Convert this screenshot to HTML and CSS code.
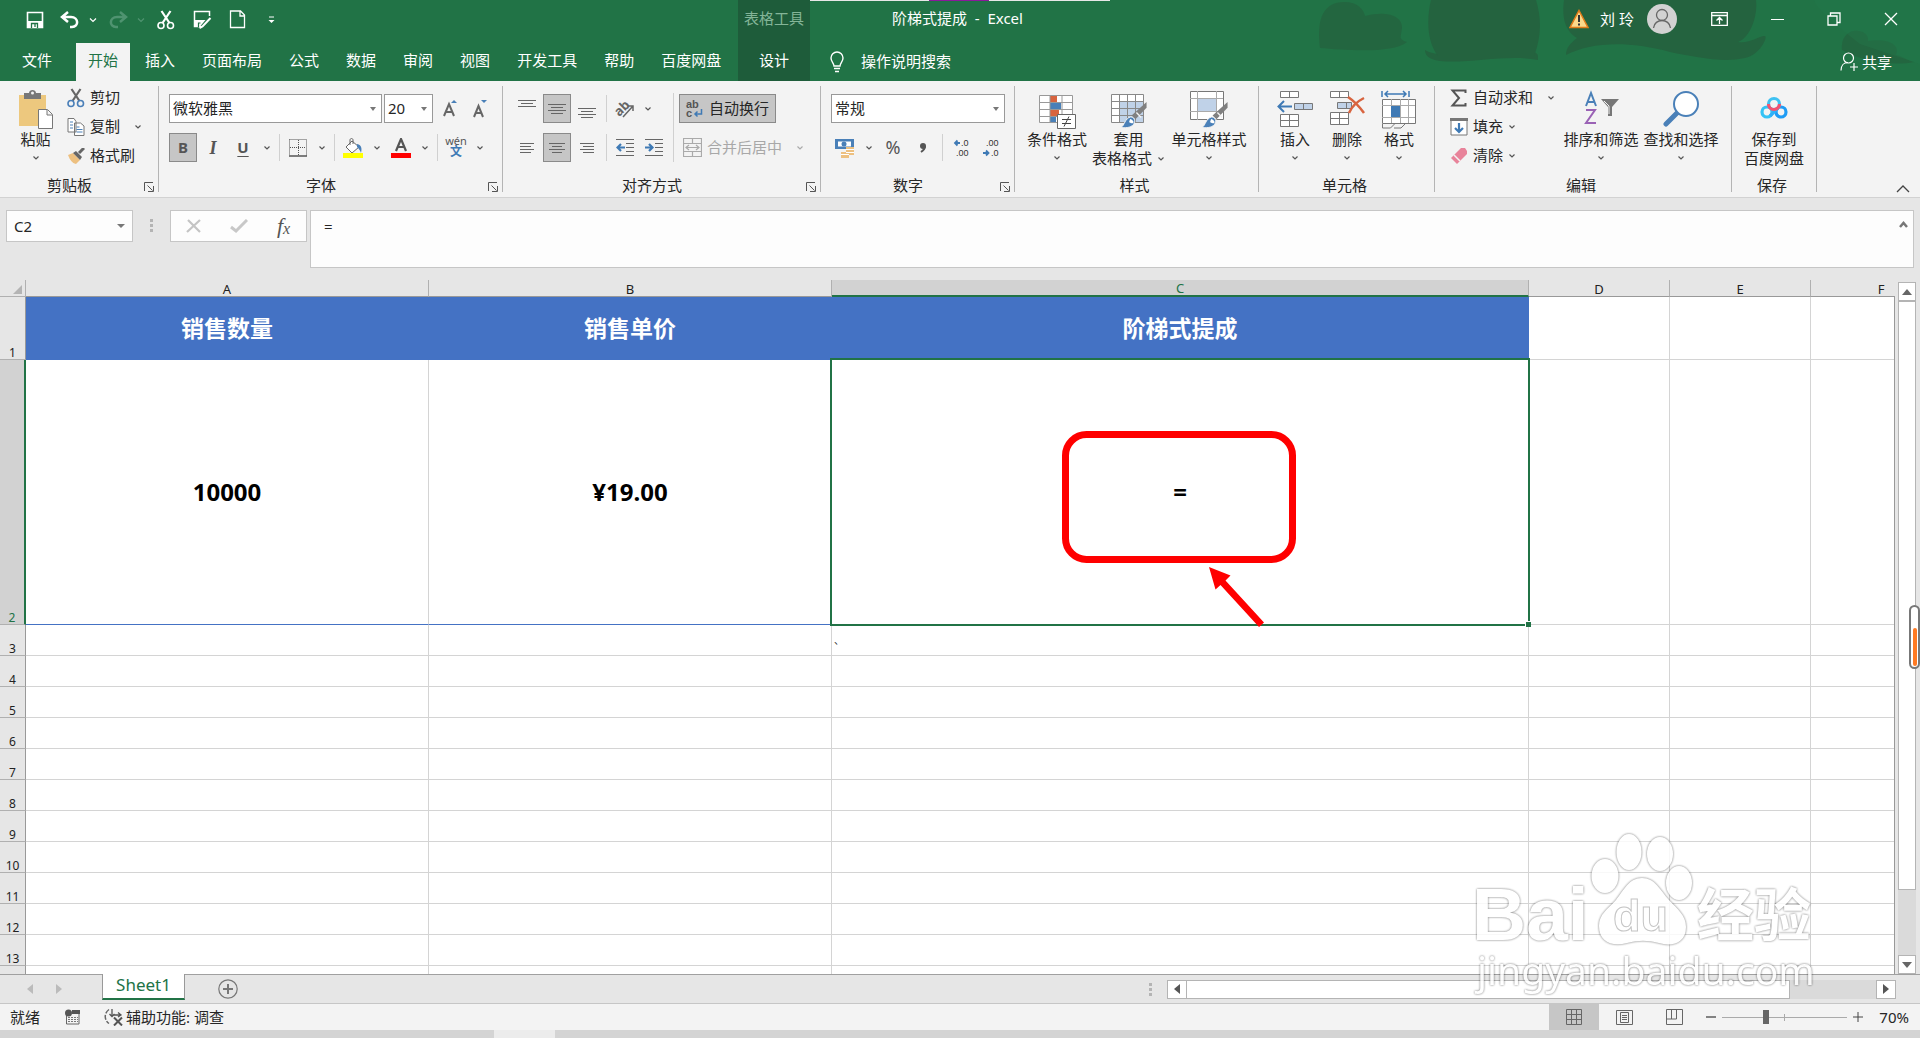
FILE: index.html
```html
<!DOCTYPE html>
<html lang="zh-CN">
<head>
<meta charset="utf-8">
<title>阶梯式提成 - Excel</title>
<link rel="stylesheet" href="styles.css">
</head>
<body>
<svg class="defs" aria-hidden="true">
  <symbol id="chev" viewBox="0 0 8 6"><path d="M1.500 1.500L4 4l2.500-2.500" fill="none" stroke="#555" stroke-width="1.200"/></symbol>
  <symbol id="chevw" viewBox="0 0 8 6"><path d="M1 1.500l3 3 3-3" fill="none" stroke="currentColor" stroke-width="1.200"/></symbol>
  <symbol id="launch" viewBox="0 0 10 10"><path d="M.5 9V.5H9M3.500 3.500l5 5M9.500 4v5.500H4" fill="none" stroke="#555"/></symbol>
  <symbol id="scissors" viewBox="0 0 18 20"><path d="M4.500 1l8 12M13.500 1l-8 12" stroke="var(--blade,#666)" stroke-width="2.200" fill="none"/><circle cx="4" cy="15.500" r="3" fill="none" stroke="var(--ring,#4a7fb8)" stroke-width="1.600"/><circle cx="13.500" cy="15.500" r="3" fill="none" stroke="var(--ring,#4a7fb8)" stroke-width="1.600"/></symbol>
  <symbol id="brush" viewBox="0 0 30 30"><path d="M28.500 1v6L17 19l-4-4z" fill="#808080"/><path d="M18 12l5 5" stroke="#f3f3f3" stroke-width="1.500"/><path d="M2 27.500C6 25 6 18 12 16.500c3 0 5 3 4 6-2 5-8 5.500-14 5z" fill="#4a80b8" stroke="#f3f3f3"/><path d="M11.500 18.500c2 .5 4 2 3.500 4-1.500 1-4 .5-4.500-1z" fill="#fff"/></symbol>
</svg>

<header class="head">
  <svg class="clouds" viewBox="0 0 620 81" aria-hidden="true"><g fill="#24633f"><path d="M20 48c-4-30 4-46 24-46 14 0 20 8 21 14 22-6 38 0 37 12-1 9-4 11 5 14-14 12-62 8-87 6z" opacity=".8"/><path d="M125 50c9 6 30 6 106 0 8 4 7 5 7 10-30-6-70 4-98 1-12-2-15-6-15-11z"/><path d="M131 0h105c6 20 5 38-2 56h-96c-12-15-11-40-7-56z"/><path d="M264 0h192c2 16-6 38-18 42 12 2 22-7 27-6 3 1-5 19-20 22-22 5-50-1-75-6-45-12-80-9-104 3 0-8 5-12 11-17-13-8-15-22-13-38z"/><path d="M542 50c-2-26 28-22 26-9 18-3 33 3 28 14 6 1 11 5 18 7-20 4-50 0-72-12z" opacity=".8"/></g><path d="M514 0c4 10 10 12 16 20l30 24 60 20V0z" fill="#24774a" opacity=".4"/></svg>
  <div class="head-left">
    <div class="quick">
      <button aria-label="保存" class="q1"><svg width="18" height="18" viewBox="0 0 18 18"><path d="M1.500 1.500h15v15h-15z" fill="none" stroke="#fff" stroke-width="1.600"/><path d="M2 10h14v6H2z" fill="#fff"/><path d="M5.500 17v-4.500h6V17M9 13v3" stroke="#217346" stroke-width="1.300" fill="none"/></svg></button>
      <button aria-label="撤消" class="q2"><svg width="20" height="18" viewBox="0 0 20 18"><path d="M8 1L2 6l6 5M3 6h8c8 0 8 10 1 10h-2" fill="none" stroke="#fff" stroke-width="2.500"/></svg></button>
      <button aria-label="撤消列表" class="q3"><svg width="8" height="6"><use href="#chevw"/></svg></button>
      <button aria-label="恢复" class="q4 dim"><svg width="20" height="18" viewBox="0 0 20 18"><path d="M12 1l6 5-6 5M17 6H9C1 6 1 16 8 16h2" fill="none" stroke="currentColor" stroke-width="2.500"/></svg></button>
      <button aria-label="恢复列表" class="q5 dim"><svg width="8" height="6"><use href="#chevw"/></svg></button>
      <button aria-label="剪切" class="q6 mono"><svg width="18" height="20"><use href="#scissors"/></svg></button>
      <button aria-label="另存为" class="q7"><svg width="19" height="19" viewBox="0 0 19 19"><path d="M16.500 6V1.500h-15v15H8" fill="none" stroke="#fff" stroke-width="1.500"/><path d="M2 10h10.500L7 16.500H2z" fill="#fff"/><path d="M5.500 17v-4h2" fill="none" stroke="#217346" stroke-width="1.200"/><path d="M17.500 8l-8 8.500-3 1.500" stroke="#fff" stroke-width="2" fill="none"/></svg></button>
      <button aria-label="新建" class="q8"><svg width="17" height="19" viewBox="0 0 17 19"><path d="M1.500 1h10l4 4v12.500h-14zM11 1v5h5" fill="none" stroke="#fff" stroke-width="1.300"/></svg></button>
      <button aria-label="自定义快速访问工具栏" class="q9"><svg width="7" height="8" viewBox="0 0 7 8"><path d="M1 1h5" stroke="#fff"/><path d="M.5 4h6L3.500 7z" fill="#fff"/></svg></button>
    </div>
    <nav class="tabs">
      <a href="#" class="file">文件</a><a href="#" class="on">开始</a><a href="#">插入</a><a href="#">页面布局</a><a href="#">公式</a><a href="#">数据</a><a href="#">审阅</a><a href="#">视图</a><a href="#">开发工具</a><a href="#">帮助</a><a href="#">百度网盘</a>
    </nav>
  </div>
  <div class="context"><span>表格工具</span><a href="#">设计</a></div>
  <div class="head-right">
    <div class="strip"><i></i></div>
    <div class="title-row">
      <h1>阶梯式提成&nbsp; -&nbsp; Excel</h1>
      <svg class="warn" width="20" height="20" viewBox="0 0 20 20"><path d="M10 1.500L19 18.500H1z" fill="#fbd98b" stroke="#e07b1a" stroke-width="1.500"/><path d="M10 6v7M10 14.500v2" stroke="#333" stroke-width="2"/></svg>
      <span class="user">刘 玲</span>
      <svg class="avatar" width="30" height="30" viewBox="0 0 30 30"><circle cx="15" cy="15" r="15" fill="#d2d2d2"/><circle cx="15" cy="11" r="5.500" fill="none" stroke="#666" stroke-width="1.300"/><path d="M6.500 24c1-10 16-10 17 0" fill="none" stroke="#666" stroke-width="1.300"/></svg>
      <div class="winbtns">
        <button aria-label="功能区显示选项"><svg width="17" height="14" viewBox="0 0 17 14"><path d="M.7.700h15.600v12.600H.7zM1 3.500h15M8.500 12V6M5.500 8.500l3-3 3 3" fill="none" stroke="#fff" stroke-width="1.300"/></svg></button>
        <button aria-label="最小化"><svg width="13" height="14" viewBox="0 0 13 14"><path d="M0 7.500h13" stroke="#fff"/></svg></button>
        <button aria-label="还原"><svg width="14" height="14" viewBox="0 0 14 14"><path d="M1 4h9v9H1zM3.500 4V1H13v9.500h-3" fill="none" stroke="#fff" stroke-width="1.300"/></svg></button>
        <button aria-label="关闭"><svg width="14" height="14" viewBox="0 0 14 14"><path d="M1 1l12 12M13 1L1 13" stroke="#fff" stroke-width="1.300"/></svg></button>
      </div>
    </div>
    <div class="tell-row">
      <svg width="14" height="22" viewBox="0 0 14 22"><path d="M4 15c0-3-3-4-3-8a6 6 0 0112 0c0 4-3 5-3 8z" fill="none" stroke="#fff" stroke-width="1.400"/><path d="M4 17.500h6M5 20.500h4" stroke="#fff" stroke-width="1.500"/></svg>
      <a href="#" class="tell">操作说明搜索</a>
      <button class="share"><svg width="19" height="20" viewBox="0 0 19 20"><circle cx="8.500" cy="6" r="5" fill="none" stroke="#fff" stroke-width="1.200"/><path d="M1 18.500c0-5 3-8 7-8M14 11v8M10 15h8" fill="none" stroke="#fff" stroke-width="1.200"/></svg>共享</button>
    </div>
  </div>
</header>

<section class="ribbon">
  <div class="group g-clip">
    <div class="body">
      <button class="big paste"><svg width="36" height="40" viewBox="0 0 36 40"><path d="M1 5h27v31H1z" fill="#edc87e"/><path d="M6 9V3h5c0-4 7-4 7 0h5v6z" fill="#777"/><circle cx="14.500" cy="3" r="1.500" fill="#f3f3f3"/><path d="M20.500 19.500h9l5 5v14h-14zM29 20v5h5" fill="#fff" stroke="#777"/></svg><span>粘贴</span><svg width="8" height="6"><use href="#chev"/></svg></button>
      <div class="stack">
        <button><svg width="18" height="20"><use href="#scissors"/></svg>剪切</button>
        <button><svg width="18" height="18" viewBox="0 0 18 18"><path d="M1 .5h6l2 3V14H1zM7.500 5h6l3.500 3v9.500H7.500z" fill="#fff" stroke="#777"/><path d="M3 4h3M3 7h3M3 10h3M9.500 9h3M9.500 11.500h6M9.500 14h6" stroke="#4a80b8"/></svg>复制<svg class="far" width="8" height="6"><use href="#chev"/></svg></button>
        <button><svg width="18" height="16" viewBox="0 0 18 16"><path d="M1 7l5-2 7 7-4 4c-4-1-6-4-8-9z" fill="#edc080"/><path d="M6 5l3-2 6 6-2 3z" fill="#666"/><path d="M12 5l5-5" stroke="#666" stroke-width="3"/></svg>格式刷</button>
      </div>
    </div>
    <footer><span>剪贴板</span><button aria-label="剪贴板设置"><svg width="10" height="10"><use href="#launch"/></svg></button></footer>
  </div>

  <div class="group g-font">
    <div class="body rows">
      <div class="row">
        <select class="sel w-font" aria-label="字体"><option>微软雅黑</option></select>
        <select class="sel w-size" aria-label="字号"><option>20</option></select>
        <button class="ib" aria-label="增大字号"><svg width="16" height="18" viewBox="0 0 16 18"><path d="M3 16L8 4l5 12M5 12h6" fill="none" stroke="#666" stroke-width="2"/><path d="M10 3l3-3 3 3z" fill="#4a80b8"/></svg></button>
        <button class="ib" aria-label="减小字号"><svg width="16" height="18" viewBox="0 0 16 18"><path d="M3 17L7.500 6l4.500 11M5 13h5" fill="none" stroke="#666" stroke-width="2"/><path d="M10 0h6l-3 3z" fill="#4a80b8"/></svg></button>
      </div>
      <div class="row">
        <button class="ib on bold">B</button><button class="ib ital">I</button><button class="ib under">U</button><button class="ch" aria-label="下划线选项"><svg width="8" height="6"><use href="#chev"/></svg></button><i class="sep"></i>
        <button class="ib" aria-label="边框"><svg width="18" height="18" viewBox="0 0 18 18"><path d="M.5.500h17v16M.5.500v16M9.500 1v15M1 8.500h16" fill="none" stroke="#555" stroke-dasharray="1 1"/><path d="M0 17h18" stroke="#555" stroke-width="1.500"/></svg></button><button class="ch" aria-label="边框选项"><svg width="8" height="6"><use href="#chev"/></svg></button><i class="sep"></i>
        <button class="ib" aria-label="填充颜色"><svg width="20" height="20" viewBox="0 0 20 20"><path d="M9 3l7 6-7 6-6-6z" fill="#fff" stroke="#666"/><path d="M7 7V2c0-2 3-2 3 0v4" fill="none" stroke="#666"/><path d="M14 6c5 1 5 5 4 9-1-3-2-4-4-6z" fill="#4a80b8"/><path d="M0 15h20v5H0z" fill="#ff0"/></svg></button><button class="ch" aria-label="填充选项"><svg width="8" height="6"><use href="#chev"/></svg></button>
        <button class="ib" aria-label="字体颜色"><svg width="20" height="20" viewBox="0 0 20 20"><path d="M5 13L10 1l5 12M7 9h6" fill="none" stroke="#555" stroke-width="2.200"/><path d="M0 15h20v5H0z" fill="#f00"/></svg></button><button class="ch" aria-label="颜色选项"><svg width="8" height="6"><use href="#chev"/></svg></button><i class="sep"></i>
        <button class="ib pinyin"><span>wén</span><b>文</b></button><button class="ch" aria-label="拼音选项"><svg width="8" height="6"><use href="#chev"/></svg></button>
      </div>
    </div>
    <footer><span>字体</span><button aria-label="字体设置"><svg width="10" height="10"><use href="#launch"/></svg></button></footer>
  </div>

  <div class="group g-align">
    <div class="body">
      <div class="rows">
        <div class="row">
          <button class="ib" aria-label="顶端对齐"><svg width="18" height="20" viewBox="0 0 18 20"><path d="M0 1.500h18M3 4.500h12M0 7.500h18" stroke="#666"/></svg></button><button class="ib on" aria-label="垂直居中"><svg width="18" height="20" viewBox="0 0 18 20"><path d="M0 5.500h18M3 8.500h12M0 11.500h18M3 14.500h12" stroke="#666"/></svg></button><button class="ib" aria-label="底端对齐"><svg width="18" height="20" viewBox="0 0 18 20"><path d="M0 9.500h18M3 12.500h12M0 15.500h18M3 18.500h12" stroke="#666"/></svg></button><i class="sep"></i><button class="ib tight" aria-label="方向"><svg width="20" height="18" viewBox="0 0 20 18" overflow="visible"><text x="0" y="13" font-size="13" font-weight="700" fill="#666" transform="rotate(-45 7 10)">ab</text><path d="M8 17L18 6M13 6h5v5" fill="none" stroke="#666" stroke-width="1.500"/></svg></button><button class="ch" aria-label="方向选项"><svg width="8" height="6"><use href="#chev"/></svg></button>
        </div>
        <div class="row">
          <button class="ib" aria-label="左对齐"><svg width="14" height="12" viewBox="0 0 14 12"><path d="M0 1.500h14M0 4.500h11M0 7.500h14M0 10.500h11" stroke="#666"/></svg></button><button class="ib on" aria-label="居中"><svg width="16" height="12" viewBox="0 0 16 12"><path d="M0 1.500h16M3 4.500h10M0 7.500h16M3 10.500h10" stroke="#666"/></svg></button><button class="ib" aria-label="右对齐"><svg width="14" height="12" viewBox="0 0 14 12"><path d="M0 1.500h14M3 4.500h11M0 7.500h14M3 10.500h11" stroke="#666"/></svg></button><i class="sep"></i><button class="ib tight" aria-label="减少缩进"><svg width="18" height="17" viewBox="0 0 18 17"><path d="M0 .5h18M10 4.500h8M10 8.500h8M10 12.500h8M0 16.500h18" stroke="#666"/><path d="M9 8.500H2M5 5L1.500 8.500 5 12" fill="none" stroke="#3f7ab5" stroke-width="2.200"/></svg></button><button class="ib" aria-label="增加缩进"><svg width="18" height="17" viewBox="0 0 18 17"><path d="M0 .5h18M10 4.500h8M10 8.500h8M10 12.500h8M0 16.500h18" stroke="#666"/><path d="M0 8.500h7M4 5l3.500 3.500L4 12" fill="none" stroke="#3f7ab5" stroke-width="2.200"/></svg></button>
        </div>
      </div>
      <i class="sep tall"></i>
      <div class="rows">
        <div class="row"><button class="wrap"><svg width="17" height="20" viewBox="0 0 17 20" overflow="visible"><g class="lib" font-size="11" font-weight="700" fill="#555"><text x="0" y="9">ab</text><text x="0" y="18">c</text></g><path d="M15.500 10v5H9M11.500 12.500L9 15l2.500 2.500" fill="none" stroke="#3f7ab5" stroke-width="1.500"/></svg>自动换行</button></div>
        <div class="row"><button class="merge" disabled><svg width="19" height="19" viewBox="0 0 19 19"><path d="M.5.500h18v18H.5zM.5 5.500h18M.5 13.500h18M9.500 1v4M9.500 14v4M3 9.500h13M6 7L3 9.500 6 12M13 7l3 2.500L13 12" fill="none" stroke="#aaa" stroke-width="1.200"/></svg>合并后居中<svg class="far" width="8" height="6" viewBox="0 0 8 6"><path d="M1.500 1.500L4 4l2.500-2.500" fill="none" stroke="#aaa" stroke-width="1.200"/></svg></button></div>
      </div>
    </div>
    <footer><span>对齐方式</span><button aria-label="对齐设置"><svg width="10" height="10"><use href="#launch"/></svg></button></footer>
  </div>

  <div class="group g-num">
    <div class="body rows">
      <div class="row"><select class="sel w-num" aria-label="数字格式"><option>常规</option></select></div>
      <div class="row">
        <button class="ib" aria-label="会计数字格式"><svg width="20" height="20" viewBox="0 0 20 20"><path d="M0 1h19v10H0z" fill="#4a80b8"/><path d="M3 3.500h13v5H3z" fill="#fff"/><circle cx="9" cy="6" r="2.500" fill="#4a80b8"/><path d="M11 9h8v8h-8zM6 14h8v6H6z" fill="#edc080"/><path d="M11 11.500h8M11 14.500h8M6 16.500h8" stroke="#fff"/></svg></button><button class="ch" aria-label="会计选项"><svg width="8" height="6"><use href="#chev"/></svg></button><button class="ib pct">%</button><button class="ib" aria-label="千位分隔"><svg width="8" height="12" viewBox="0 0 8 12"><circle cx="4" cy="4" r="3" fill="#555"/><path d="M6 4c0 3-1 4-4 6" fill="none" stroke="#555" stroke-width="2"/></svg></button><i class="sep"></i>
        <button class="ib" aria-label="增加小数位数"><svg width="18" height="20" viewBox="0 0 18 20" overflow="visible"><g class="lib" font-size="9" fill="#333"><text x="8" y="8">.0</text><text x="3" y="18">.00</text></g><path d="M7 5H2M4.500 2.500L2 5l2.500 2.500" fill="none" stroke="#3f7ab5" stroke-width="1.800"/></svg></button><button class="ib" aria-label="减少小数位数"><svg width="18" height="20" viewBox="0 0 18 20" overflow="visible"><g class="lib" font-size="9" fill="#333"><text x="3" y="8">.00</text><text x="8" y="18">.0</text></g><path d="M0 15h5M3 12.500L5.500 15 3 17.500" fill="none" stroke="#3f7ab5" stroke-width="1.800"/></svg></button>
      </div>
    </div>
    <footer><span>数字</span><button aria-label="数字设置"><svg width="10" height="10"><use href="#launch"/></svg></button></footer>
  </div>

  <div class="group g-style">
    <div class="body">
      <button class="big w68"><svg width="38" height="40" viewBox="0 0 38 40"><path d="M1.500 5.500h33v27h-33z" fill="#fff"/><path d="M12 6h7v6h-7zM12 20h9v6h-9z" fill="#d8643f"/><path d="M12 13h11v6H12zM12 27h6v5h-6z" fill="#4a80b8"/><path d="M1.500 5.500h33v27h-33zM12 5v27M24 5v27M1 12.500h33M1 19.500h33M1 26.500h33" fill="none" stroke="#999"/><path d="M19.500 24.500h18v14h-18z" fill="#fff" stroke="#666"/><path d="M24 29.500h9M24 33.500h9M31 26.500l-5 10" stroke="#444" fill="none"/></svg><span>条件格式</span><svg width="8" height="6"><use href="#chev"/></svg></button>
      <button class="big w75"><svg width="38" height="40" viewBox="0 0 38 40"><path d="M1.500 4.500h32v28h-32z" fill="#fff"/><path d="M9 11h25v22H9z" fill="#c0d2e8"/><path d="M1.500 4.500h32v28h-32zM9.500 4v28M17.500 4v28M25.500 4v28M1 11.500h32M1 18.500h32M1 25.500h32" fill="none" stroke="#888"/><svg x="9" y="11" width="29" height="29"><use href="#brush"/></svg></svg><span>套用</span><span class="line2">表格格式<svg width="8" height="6"><use href="#chev"/></svg></span></button>
      <button class="big w86"><svg width="40" height="40" viewBox="0 0 40 40"><path d="M1.500 1.500h33v28h-33z" fill="#fff" stroke="#777"/><path d="M9 8h18v13H9z" fill="#c0d2e8"/><path d="M8.500 1v29M27.500 1v29M1 8.500h33M1 21.500h33" stroke="#aaa"/><svg x="11" y="11" width="29" height="29"><use href="#brush"/></svg></svg><span>单元格样式</span><svg width="8" height="6"><use href="#chev"/></svg></button>
    </div>
    <footer><span>样式</span></footer>
  </div>

  <div class="group g-cells">
    <div class="body">
      <button class="big w52"><svg width="38" height="40" viewBox="0 0 38 40"><path d="M4.500 1.500h18v6h-18zM13.500 1v7M4.500 24.500h18v12h-18zM13.500 24v12M4 30.500h18" fill="#fff" stroke="#777"/><path d="M18.500 13.500h18v6h-18zM27.500 13v7" fill="#c0d2e8" stroke="#777"/><path d="M16 16.500H3M8 11l-5.500 5.500L8 22" fill="none" stroke="#3f7ab5" stroke-width="2"/></svg><span>插入</span><svg width="8" height="6"><use href="#chev"/></svg></button>
      <button class="big w52"><svg width="38" height="40" viewBox="0 0 38 40"><path d="M2.500 1.500h18v6h-18zM11.500 1v7M2.500 22.500h18v12h-18zM11.500 22v12M2 28.500h18" fill="#fff" stroke="#777"/><path d="M9.500 12.500h14v6h-14zM18.500 12v7" fill="#c0d2e8" stroke="#777"/><path d="M20 7c6 4 11 9 16 16M36 8c-6 3-12 8-15 15" fill="none" stroke="#d8643f" stroke-width="2.500"/></svg><span>删除</span><svg width="8" height="6"><use href="#chev"/></svg></button>
      <button class="big w52"><svg width="36" height="40" viewBox="0 0 36 40"><path d="M1.500 9.500h33v24h-33z" fill="#fff" stroke="#777"/><path d="M10.500 9v24M19.500 9v24M27.500 9v24M1 15.500h33M1 27.500h33" stroke="#aaa"/><path d="M10 16h9v11h-9z" fill="#3f7ab5"/><path d="M1.500 34v4h8l4-4M13 38h7l4-4" fill="none" stroke="#777"/><path d="M1 1v6M28 1v6M4 4h21M7 1L4 4l3 3M22 1l3 3-3 3" fill="none" stroke="#3f7ab5" stroke-width="1.500"/></svg><span>格式</span><svg width="8" height="6"><use href="#chev"/></svg></button>
    </div>
    <footer><span>单元格</span></footer>
  </div>

  <div class="group g-edit">
    <div class="body">
      <div class="stack">
        <button><svg width="18" height="18" viewBox="0 0 18 18"><path d="M15.500 4V1.500H2.500L9 9l-6.500 7.500h13V14" fill="none" stroke="#555" stroke-width="2"/></svg>自动求和<svg class="far" width="8" height="6"><use href="#chev"/></svg></button>
        <button><svg width="18" height="18" viewBox="0 0 18 18"><path d="M1 1h16v16H1z" fill="#fff" stroke="#777"/><path d="M0 0h18v3H0z" fill="#777"/><path d="M9 5v8M5 10l4 4 4-4" fill="none" stroke="#3f7ab5" stroke-width="2.200"/></svg>填充<svg width="8" height="6"><use href="#chev"/></svg></button>
        <button><svg width="18" height="18" viewBox="0 0 18 18"><path d="M1 11L11 1h4l2 3v3L7 17z" fill="#e8839a"/><path d="M4 8l6 6" stroke="#f3f3f3" stroke-width="1.500"/></svg>清除<svg width="8" height="6"><use href="#chev"/></svg></button>
      </div>
      <button class="big w80"><svg width="36" height="40" viewBox="0 0 36 40"><path d="M3 16L8 3l5 13M5 12h7" fill="none" stroke="#4a80b8" stroke-width="2"/><path d="M3 20h9L3 33h10" fill="none" stroke="#9a62b5" stroke-width="2"/><path d="M18 9h18l-7 8v9h-4v-9z" fill="#777"/><path d="M21 11l5 5v8" fill="none" stroke="#f3f3f3"/></svg><span>排序和筛选</span><svg width="8" height="6"><use href="#chev"/></svg></button>
      <button class="big w80"><svg width="36" height="40" viewBox="0 0 36 40"><path d="M3 34l13-13" stroke="#4a80b8" stroke-width="5" stroke-linecap="round"/><circle cx="23" cy="14" r="12" fill="#fff" stroke="#4a80b8" stroke-width="2"/></svg><span>查找和选择</span><svg width="8" height="6"><use href="#chev"/></svg></button>
    </div>
    <footer><span>编辑</span></footer>
  </div>

  <div class="group g-save">
    <div class="body">
      <button class="big w80"><svg width="28" height="40" viewBox="0 0 28 40"><g fill="none" stroke-width="3.200"><circle cx="7" cy="22" r="5" stroke="#35c3f5"/><circle cx="21" cy="22" r="5" stroke="#1e9cf5"/><path d="M10 26l8-8" stroke="#2fb0f8"/><circle cx="14" cy="14" r="5.500" stroke="#3ec1f2"/><path d="M8.500 14a5.500 5.500 0 0011 0" stroke="#f4526f"/></g></svg><span>保存到</span><span class="line2">百度网盘</span></button>
    </div>
    <footer><span>保存</span></footer>
  </div>
  <button class="collapse" aria-label="折叠功能区"><svg width="14" height="8" viewBox="0 0 14 8"><path d="M1 7l6-6 6 6" fill="none" stroke="#444" stroke-width="1.300"/></svg></button>
</section>

<section class="fbar">
  <div class="namebox"><input aria-label="名称框" value="C2"><button aria-label="名称列表"><svg width="8" height="4" viewBox="0 0 8 4"><path d="M0 0h8L4 4z" fill="#777"/></svg></button></div>
  <div class="dots"><i></i><i></i><i></i></div>
  <div class="fx">
    <button aria-label="取消"><svg width="16" height="14" viewBox="0 0 16 14"><path d="M2 1l12 12M14 1L1 13" stroke="#c4c4c4" stroke-width="2.200"/></svg></button>
    <button aria-label="输入"><svg width="18" height="14" viewBox="0 0 18 14"><path d="M1 8l5 4L17 1" fill="none" stroke="#c8c8c8" stroke-width="3"/></svg></button>
    <button class="fn" aria-label="插入函数"><i>f</i><i class="x">x</i></button>
  </div>
  <div class="formula"><textarea aria-label="编辑栏" rows="2">=</textarea><button aria-label="折叠编辑栏"><svg width="9" height="7" viewBox="0 0 9 7"><path d="M1 6l3.500-4L8 6" fill="none" stroke="#777" stroke-width="2.500"/></svg></button></div>
</section>

<main class="sheet">
  <div class="viewport">
    <table>
      <colgroup><col class="c0"><col class="cA"><col class="cA"><col class="cC"><col class="cD"><col class="cD"><col class="cD"></colgroup>
      <thead><tr><th class="corner"><svg width="9" height="9" viewBox="0 0 9 9"><path d="M9 0v9H0z" fill="#b4b4b4"/></svg></th><th>A</th><th>B</th><th class="sel-col">C</th><th>D</th><th>E</th><th>F</th></tr></thead>
      <tbody>
        <tr class="r1"><th>1</th><td>销售数量</td><td>销售单价</td><td>阶梯式提成</td><td class="e"></td><td class="e"></td><td class="e"></td></tr>
        <tr class="r2"><th>2</th><td>10000</td><td>¥19.00</td><td class="active">=<div class="cursor"><b></b></div>
          <svg class="callout" width="240" height="200" viewBox="0 0 240 200"><rect x="4.500" y="4.500" width="227" height="125" rx="21" fill="none" stroke="#f00" stroke-width="7"/><path d="M148 137l21.500 8.500-5 5L203 192.500l-5 4.500-38.500-42-5 4.500z" fill="#f00"/></svg></td><td></td><td></td><td></td></tr>
        <tr><th>3</th><td></td><td></td><td>、</td><td></td><td></td><td></td></tr>
        <tr><th>4</th><td></td><td></td><td></td><td></td><td></td><td></td></tr>
        <tr><th>5</th><td></td><td></td><td></td><td></td><td></td><td></td></tr>
        <tr><th>6</th><td></td><td></td><td></td><td></td><td></td><td></td></tr>
        <tr><th>7</th><td></td><td></td><td></td><td></td><td></td><td></td></tr>
        <tr><th>8</th><td></td><td></td><td></td><td></td><td></td><td></td></tr>
        <tr><th>9</th><td></td><td></td><td></td><td></td><td></td><td></td></tr>
        <tr><th>10</th><td></td><td></td><td></td><td></td><td></td><td></td></tr>
        <tr><th>11</th><td></td><td></td><td></td><td></td><td></td><td></td></tr>
        <tr><th>12</th><td></td><td></td><td></td><td></td><td></td><td></td></tr>
        <tr><th>13</th><td></td><td></td><td></td><td></td><td></td><td></td></tr>
        <tr><th></th><td></td><td></td><td></td><td></td><td></td><td></td></tr>
      </tbody>
    </table>
  </div>
  <div class="vscroll">
    <button aria-label="向上滚动"><svg width="10" height="6" viewBox="0 0 10 6"><path d="M0 6h10L5 0z" fill="#666"/></svg></button>
    <div class="vtrack"><div class="vthumb"></div></div>
    <button aria-label="向下滚动"><svg width="10" height="6" viewBox="0 0 10 6"><path d="M0 0h10L5 6z" fill="#666"/></svg></button>
  </div>
  <div class="pill"><i></i></div>
</main>

<div class="sheetbar">
  <button class="nav" aria-label="上一个工作表"><svg width="6" height="10" viewBox="0 0 6 10"><path d="M6 0v10L0 5z" fill="#bbb"/></svg></button>
  <button class="nav" aria-label="下一个工作表"><svg width="6" height="10" viewBox="0 0 6 10"><path d="M0 0v10l6-5z" fill="#bbb"/></svg></button>
  <a href="#" class="sheettab">Sheet1</a>
  <button class="add" aria-label="新工作表"><svg width="20" height="20" viewBox="0 0 20 20"><circle cx="10" cy="10" r="9.200" fill="none" stroke="#777" stroke-width="1.200"/><path d="M10 5v10M5 10h10" stroke="#777" stroke-width="2"/></svg></button>
  <div class="dots"><i></i><i></i><i></i></div>
  <div class="hscroll">
    <button aria-label="向左滚动"><svg width="6" height="10" viewBox="0 0 6 10"><path d="M6 0v10L0 5z" fill="#555"/></svg></button>
    <div class="htrack"><div class="hthumb"></div></div>
    <button aria-label="向右滚动"><svg width="6" height="10" viewBox="0 0 6 10"><path d="M0 0v10l6-5z" fill="#555"/></svg></button>
  </div>
</div>

<footer class="status">
  <span class="ready">就绪</span>
  <svg class="macro" width="15" height="16" viewBox="0 0 15 16"><path d="M1.500 5v10h12.500V3" fill="none" stroke="#666"/><path d="M7 1h8v4H7z" fill="#555"/><circle cx="3.500" cy="4" r="3.500" fill="#555"/><path d="M3 8.500h10M3 10.500h10M3 12.500h10" stroke="#777" stroke-dasharray="2 1"/></svg>
  <button class="acc"><svg width="20" height="18" viewBox="0 0 20 18"><path d="M5 1.500C0 5 0 12 5 15.500" fill="none" stroke="#666" stroke-width="1.500" stroke-dasharray="5 1.500"/><path d="M8 1v7M5.500 6L8 8.500 10.500 6M9 7h8M14 4.500L17 7l-3 2" fill="none" stroke="#555" stroke-width="1.300"/><path d="M10 9.500l8 8M18 9.500l-8 8" stroke="#555" stroke-width="2"/></svg>辅助功能: 调查</button>
  <div class="views">
    <button class="on" aria-label="普通"><svg width="16" height="16" viewBox="0 0 16 16"><path d="M.5.500h15v15H.5zM5.500 1v14M10.500 1v14M1 5.500h14M1 10.500h14" fill="none" stroke="#666"/></svg></button>
    <button aria-label="页面布局"><svg width="17" height="15" viewBox="0 0 17 15"><path d="M.5.500h16v14H.5zM4.500 2.500h8v10h-8zM6 5.500h5M6 7.500h5M6 9.500h5" fill="none" stroke="#666"/></svg></button>
    <button aria-label="分页预览"><svg width="17" height="16" viewBox="0 0 17 16"><path d="M.5.500h16v15H.5zM5.500 1v9M10.500 1v9H1" fill="none" stroke="#666"/></svg></button>
  </div>
  <button class="zb" aria-label="缩小"><svg width="10" height="10" viewBox="0 0 10 10"><path d="M0 5h10" stroke="#444" stroke-width="1.300"/></svg></button>
  <input class="zoom" type="range" min="0" max="100" value="34" aria-label="显示比例">
  <button class="zb" aria-label="放大"><svg width="10" height="10" viewBox="0 0 10 10"><path d="M0 5h10M5 0v10" stroke="#444"/></svg></button>
  <span class="pctv">70%</span>
</footer>
<div class="taskstrip"><i></i></div>

<svg class="mark" width="360" height="170" viewBox="0 0 360 170" aria-hidden="true">
  <g fill="#fff" font-weight="700">
    <text x="-2" y="110" font-size="75" class="lib">Bai</text>
    <ellipse cx="131" cy="46" rx="13.500" ry="17"/><ellipse cx="155" cy="22" rx="12.500" ry="18"/><ellipse cx="186" cy="24" rx="13" ry="17"/><ellipse cx="205" cy="53" rx="13" ry="17"/>
    <path d="M168 48c13 0 18 12 27 22 8 9 17 15 17 27 0 16-14 20-27 16-12-3-20-3-32 0-15 4-28-1-28-17 0-12 9-17 17-26 8-10 13-22 26-22z"/>
    <text x="223" y="106" font-size="57">经验</text>
  </g>
  <text x="139" y="101" font-size="45" font-weight="700" fill="#fff" class="lib du">du</text>
  <text x="3" y="155" font-size="39" fill="#fff">jingyan.baidu.com</text>
</svg>
</body>
</html>
```

FILE: styles.css
```css
* { box-sizing: border-box; }
body {
  margin: 0; height: 100vh; overflow: hidden; position: relative;
  display: flex; flex-direction: column;
  font: 15px/19px "Noto Sans", "Noto Sans CJK SC", sans-serif;
  color: #262626; background: #e6e6e6;
}
button { border: 0; padding: 0; margin: 0; background: none; font: inherit; color: inherit; display: flex; align-items: center; justify-content: center; white-space: nowrap; }
a { color: inherit; text-decoration: none; }
svg { flex: none; display: block; }
i { font-style: normal; }
.defs { position: absolute; width: 0; height: 0; }

/* title bar and tabs */
.head { position: relative; display: flex; height: 81px; background: #217346; color: #fff; flex: none; }
.clouds { position: absolute; right: 0; top: 0; width: 620px; height: 81px; }
.head-left { width: 738px; flex: none; }
.quick { height: 43px; padding: 0 0 4px 26px; display: flex; align-items: center; }
.quick .q2 { margin-left: 16px; }
.quick .q3 { margin-left: 9px; }
.quick .q4 { margin-left: 11px; }
.quick .q5 { margin-left: 9px; }
.quick .q6 { margin-left: 12px; }
.quick .q7 { margin-left: 18px; }
.quick .q8 { margin-left: 17px; }
.quick .q9 { margin-left: 22px; }
.dim { color: #4f9370; }
.mono { --blade: #fff; --ring: #fff; }
.tabs { display: flex; gap: 3px; height: 38px; }
.tabs a { padding: 0 12px 4px; display: flex; align-items: center; }
.tabs .file { padding-left: 22px; padding-right: 21px; }
.tabs .on { background: #f3f3f3; color: #217346; }
.context { width: 72px; flex: none; background: #1e5c3a; display: flex; flex-direction: column; align-items: center; white-space: nowrap; }
.context span { height: 43px; line-height: 36px; color: #84b598; }
.context a { line-height: 34px; }
.head-right { position: relative; flex: 1; }
.strip { position: absolute; left: 0; top: 0; width: 300px; height: 1px; background: #e8e8e8; }
.strip i { display: block; margin-left: 119px; width: 60px; height: 1px; background: #8a1a9a; }
.title-row { height: 43px; display: flex; align-items: center; padding: 0 22px 5px 82px; }
h1 { font: inherit; margin: 0; padding-bottom: 2px; flex: 1; white-space: nowrap; }
.user { margin: 0 13px 0 11px; }
.winbtns { display: flex; margin-left: 34px; gap: 43px; }
.tell-row { height: 38px; display: flex; align-items: center; padding: 0 28px 0 20px; }
.tell { margin-left: 17px; padding-bottom: 2px; flex: 1; }
.share { gap: 3px; }

/* ribbon */
.ribbon { height: 117px; flex: none; display: flex; background: #f3f3f3; border-bottom: 1px solid #d2d2d2; position: relative; }
.group { flex: none; display: flex; flex-direction: column; position: relative; }
.group::after { content: ""; position: absolute; right: 0; top: 5px; bottom: 5px; width: 1px; background: #b4b4b4; }
.g-clip { width: 159px; }
.g-font { width: 344px; }
.g-align { width: 318px; }
.g-num { width: 194px; }
.g-style { width: 244px; }
.g-cells { width: 176px; }
.g-edit { width: 297px; }
.g-save { width: 85px; }
.body { height: 92px; display: flex; padding-left: 10px; }
.g-style .body { padding-left: 8px; }
.g-save .body { padding-left: 2px; }
.g-clip .body { padding-left: 8px; }
.group footer { height: 24px; display: flex; padding-right: 5px; }
.group footer span { flex: 1; text-align: center; line-height: 25px; }
.group footer button { width: 15px; padding-top: 4px; justify-content: flex-end; }
.rows { display: flex; flex-direction: column; gap: 10px; padding-top: 13px; }
.row { display: flex; align-items: center; gap: 2px; height: 29px; }
.ib { width: 28px; height: 29px; color: #555; }
.ib.on { background: #c6c6c6; border: 1px solid #8a8a8a; }
.ib.tight { width: 26px; }
.bold { font-weight: 700; }
.ital { font: italic 700 18px/20px "Liberation Serif", serif; }
.under { font-weight: 700; text-decoration: underline; text-underline-offset: 3px; }
.pct { font-size: 18px; }
.ch { width: 16px; height: 29px; }
.sep { width: 1px; height: 27px; background: #d0d0d0; margin: 0 3px; }
.g-font .sep { margin: 0 2px; }
.sep.tall { height: 69px; margin: 12px 5px 0; }
.pinyin { flex-direction: column; font-size: 11px; line-height: 8px; }
.pinyin b { color: #3f7ab5; font-size: 12px; line-height: 13px; }
.sel {
  appearance: none; height: 29px; border: 1px solid #999; border-radius: 0; padding: 0 3px; font: inherit; color: inherit;
  background: #fff url("data:image/svg+xml,%3Csvg xmlns='http://www.w3.org/2000/svg' width='6' height='4'%3E%3Cpath d='M0 0h6L3 4z' fill='%23777'/%3E%3C/svg%3E") no-repeat right 5px center;
}
.w-font { width: 213px; }
.w-size { width: 49px; }
.w-num { width: 174px; }
.wrap, .merge { height: 29px; }
.wrap { width: 97px; gap: 6px; background: #c6c6c6; border: 1px solid #8a8a8a; }
.merge { color: #a8a8a8; gap: 5px; padding-left: 4px; }
.merge .far { margin-left: 9px; }
.stack { display: flex; flex-direction: column; padding-top: 2px; }
.stack button { height: 29px; justify-content: flex-start; gap: 5px; }
.g-clip .stack { padding-left: 4px; width: 84px; }
.g-clip .far { margin-left: 9px; }
.g-edit .stack { padding-left: 5px; width: 116px; }
.g-edit .far { margin-left: 9px; }
.big { flex-direction: column; justify-content: flex-start; padding-top: 9px; height: 92px; }
.big > svg:first-child { height: 40px; }
.big > svg:last-child { margin-top: 6px; }
.line2 { display: flex; align-items: center; gap: 5px; }
.paste { width: 55px; }
.w52 { width: 52px; }
.w68 { width: 68px; }
.w75 { width: 75px; }
.w80 { width: 80px; }
.w86 { width: 86px; }
.collapse { margin: auto 10px 4px auto; }

/* formula bar */
.fbar { flex: none; display: flex; align-items: flex-start; padding: 12px 6px 12px; background: #e6e6e6; }
.namebox, .fx, .formula { border: 1px solid #c6c6c6; background: #fdfdfd; display: flex; }
.namebox { width: 127px; height: 32px; padding: 0 7px; }
.namebox input { flex: 1; min-width: 0; border: 0; padding: 0; font: inherit; color: inherit; background: none; }
.dots { display: flex; flex-direction: column; gap: 2px; }
.dots i { width: 3px; height: 3px; background: #b4b4b4; }
.fbar .dots { margin: 9px 17px 0; }
.fx { width: 137px; height: 32px; }
.fx button { flex: 1; }
.fn { font: 22px/22px "Liberation Serif", serif; color: #555; }
.fn i { font-style: italic; }
.fn .x { font-size: 16px; padding-top: 5px; }
.formula { flex: 1; height: 58px; margin-left: 3px; padding: 6px 5px 0 13px; align-items: flex-start; }
.formula textarea { flex: 1; border: 0; padding: 0; resize: none; overflow: hidden; font: inherit; color: inherit; background: none; }
.formula button { padding-top: 4px; }

/* grid */
.sheet { flex: 1; min-height: 0; display: flex; position: relative; border-bottom: 1px solid #a0a0a0; padding-right: 4px; }
.viewport { flex: 1; overflow: hidden; position: relative; }
.viewport::after { content: ""; position: absolute; right: 0; top: 16px; bottom: 0; width: 1px; background: #999; }
table { table-layout: fixed; width: 1952px; border-collapse: separate; border-spacing: 0; }
.c0 { width: 26px; }
.cA { width: 403px; }
.cC { width: 697px; }
.cD { width: 141px; }
th { font-size: 13px; font-weight: 400; line-height: 14px; padding: 0; color: #222; background: #e6e6e6; }
thead th { height: 17px; padding-top: 2px; border-right: 1px solid #b0b0b0; border-bottom: 1px solid #999; }
thead .corner { border-bottom-color: #b0b0b0; padding: 0; }
.corner svg { margin: 2px 0 0 13px; }
thead .sel-col { background: #d2d2d2; border-bottom: 2px solid #217346; color: #217346; line-height: 13px; }
tbody th { vertical-align: bottom; border-right: 1px solid #999; border-bottom: 1px solid #b0b0b0; font-size: 12px; line-height: 13px; }
td { background: #fff; border-right: 1px solid #d4d4d4; border-bottom: 1px solid #d4d4d4; padding: 0 2px; }
thead tr { height: 17px; }
tbody tr { height: 31px; }
tbody tr:nth-child(n+3) td { font-size: 10px; line-height: 14px; vertical-align: middle; }
tbody .r1 { height: 63px; }
tbody .r2 { height: 265px; }
.r1 td, .r2 td { text-align: center; font-weight: 700; font-size: 24px; line-height: 30px; }
.r1 td { background: #4472c4; border-color: #4472c4; color: #fff; font-size: 23px; }
.r1 td.e { background: #fff; border-color: #d4d4d4; }
.r2 th { background: #d2d2d2; border-right: 2px solid #217346; color: #217346; }
.r2 td { color: #000; }
.r2 td:nth-child(2), .r2 td:nth-child(3) { border-bottom-color: #4472c4; }
.r2 .active { position: relative; }
.cursor { position: absolute; inset: -2px; border: 2px solid #217346; }
.cursor b { position: absolute; right: -3px; bottom: -3px; width: 6px; height: 6px; background: #217346; border: solid #fff; border-width: 1px 0 0 1px; }
.callout { position: absolute; left: 229px; top: 70px; }
.vscroll { width: 18px; margin: 2px 0 0 3px; display: flex; flex-direction: column; }
.vscroll button { height: 19px; background: #fff; border: 1px solid #b4b4b4; }
.vtrack { flex: 1; background: #dadada; }
.vthumb { height: 90%; background: #fff; border: 1px solid #b4b4b4; }
.pill { position: absolute; right: 0; top: 325px; width: 11px; height: 64px; border: 2px solid #777; border-radius: 6px; background: #fff; display: flex; align-items: flex-end; padding: 0 1px 1px 2px; }
.pill i { width: 4px; height: 38px; background: #ff7a22; border-radius: 2px; }

/* sheet tabs */
.sheetbar { flex: none; height: 29px; display: flex; align-items: center; padding: 0 24px; border-bottom: 1px solid #c6c6c6; }
.nav { width: 11px; margin-right: 18px; }
.sheettab { align-self: flex-start; width: 83px; height: 26px; margin: -1px 0 0 20px; background: #fff; border: solid #999; border-width: 0 1px; border-bottom: 2px solid #217346; color: #217346; font-size: 17px; line-height: 22px; text-align: center; position: relative; }
.add { margin: 0 auto 0 33px; }
.sheetbar .dots { margin-right: 15px; }
.hscroll { flex: 0 0 729px; display: flex; height: 19px; }
.hscroll button { width: 20px; background: #fff; border: 1px solid #b4b4b4; }
.htrack { flex: 1; background: #dadada; }
.hthumb { width: 87.500%; height: 100%; background: #fff; border: 1px solid #b4b4b4; border-left: 0; }

/* status bar */
.status { flex: none; height: 26px; background: #f3f3f3; display: flex; align-items: center; padding: 0 11px 0 10px; }
.macro { margin: 0 24px 0 25px; }
.acc { gap: 2px; margin-right: auto; }
.views { display: flex; align-self: stretch; }
.views button { width: 50px; }
.views .on { background: #c6c6c6; }
.zb { width: 10px; margin-left: 7px; }
.zoom { appearance: none; width: 125px; height: 16px; margin: 0 0 0 6px; background: linear-gradient(#aaa, #aaa) center/100% 1px no-repeat, linear-gradient(#aaa, #aaa) center/1px 7px no-repeat; }
.zoom::-webkit-slider-thumb { appearance: none; width: 6px; height: 14px; background: #666; }
.zoom + .zb { margin: 0 16px 0 6px; }
.taskstrip { flex: none; height: 8px; background: #d4d4d4; }
.taskstrip i { display: block; margin-left: 494px; width: 61px; height: 8px; background: #ececec; }

/* watermark over the lower right corner */
.mark { position: absolute; right: 86px; bottom: 38px; opacity: .85; filter: drop-shadow(0 0 1px rgba(0,0,0,.4)) drop-shadow(0 0 1px rgba(0,0,0,.25)); pointer-events: none; }
.lib { font-family: "Liberation Sans", sans-serif; }
.du { stroke: #bbb; stroke-width: 1; }
```
